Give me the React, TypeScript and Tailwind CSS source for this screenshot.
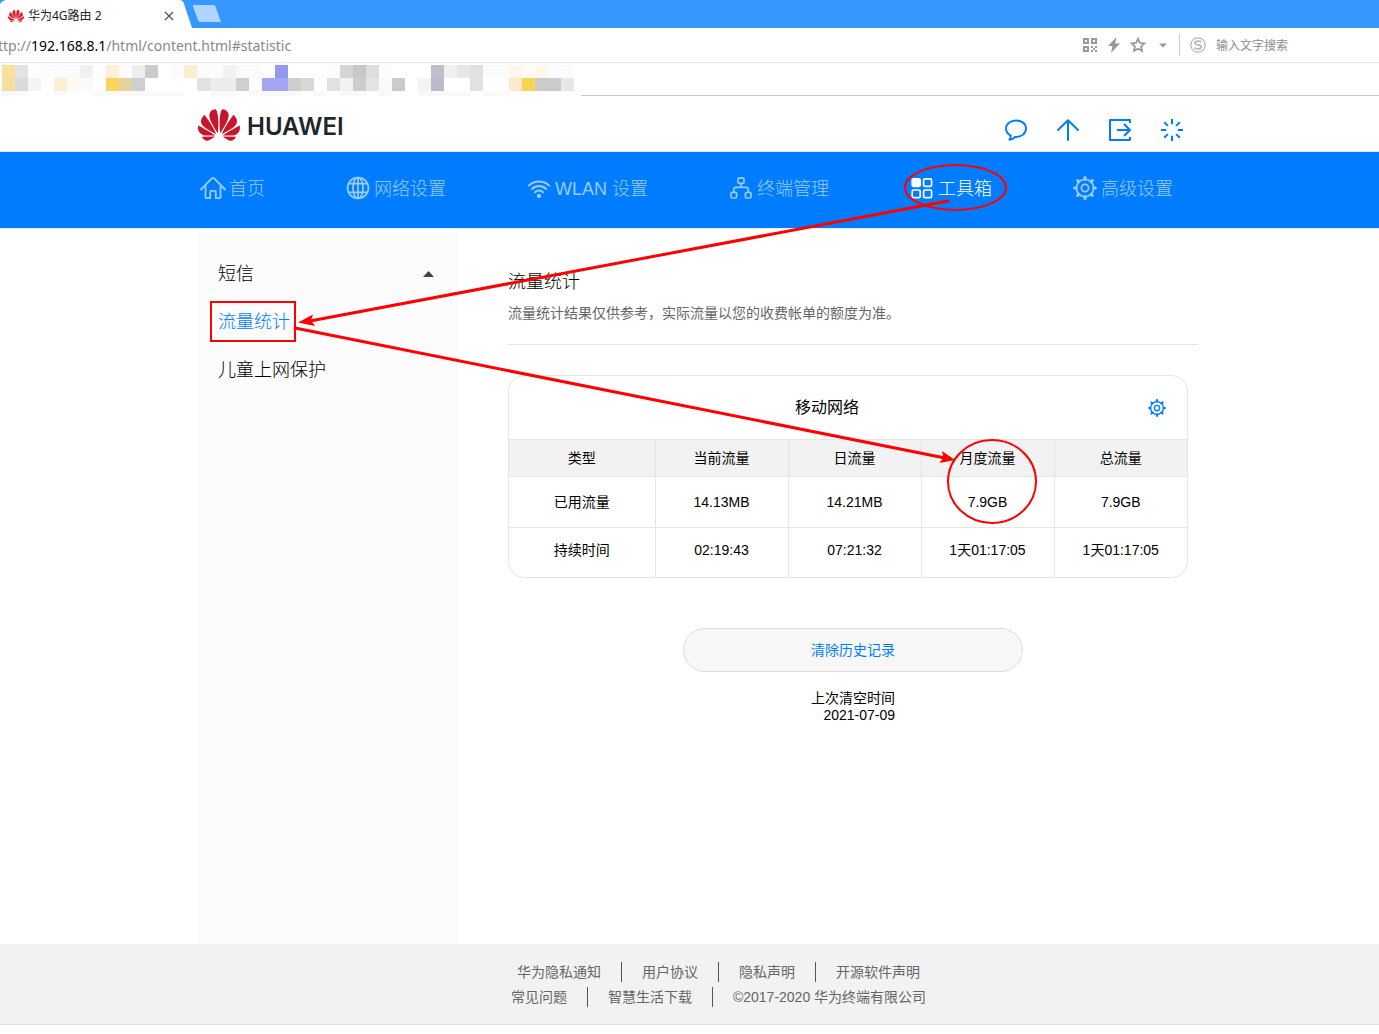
import type { ReactNode } from "react";
import { SiHuawei } from "react-icons/si";

// [row, first column, number of columns, fill]
const mosaic: [number, number, number, string][] = [
  [0, 0, 1, "#fbe199"], [0, 1, 1, "#e3e3e3"], [0, 2, 1, "#fdfdfd"], [0, 3, 3, "#fbfbfb"], [0, 6, 1, "#f1f1f1"],
  [0, 8, 1, "#fdf0d8"], [0, 9, 1, "#fbfbfb"], [0, 10, 1, "#eeeeee"], [0, 11, 1, "#cbcbcb"], [0, 13, 1, "#fbfbfb"],
  [0, 14, 1, "#fdeecd"], [0, 15, 1, "#fdfbf8"], [0, 16, 1, "#fcfcfc"], [0, 17, 1, "#f2f2f2"], [0, 18, 2, "#fbfbfb"],
  [0, 21, 1, "#9698ee"], [0, 25, 1, "#fcfcfc"], [0, 26, 1, "#d5d5d5"], [0, 27, 1, "#c8c8c8"], [0, 28, 1, "#dedede"],
  [0, 29, 1, "#fcfcfc"], [0, 33, 1, "#bfbfcc"], [0, 34, 1, "#f0f0f0"], [0, 35, 1, "#e7e7e7"], [0, 36, 1, "#e1e1e1"],
  [0, 37, 2, "#fbfbfb"], [0, 39, 1, "#fef6ec"], [0, 40, 1, "#fefaf4"], [0, 41, 1, "#fdf8ec"], [0, 42, 2, "#fbfbfb"],
  [1, 0, 1, "#f8de9d"], [1, 1, 1, "#dadada"], [1, 2, 1, "#f4f4f4"], [1, 4, 1, "#fdf0d2"], [1, 5, 1, "#fefaf1"],
  [1, 6, 1, "#f9f9f9"], [1, 8, 1, "#f8d55b"], [1, 9, 1, "#e5d29f"], [1, 10, 1, "#cfcfcf"], [1, 15, 1, "#e1e1e1"],
  [1, 16, 2, "#ececec"], [1, 18, 1, "#cfcfcf"], [1, 19, 1, "#fdfdfd"], [1, 20, 2, "#a4a6f2"], [1, 22, 1, "#cecece"],
  [1, 23, 1, "#d8d8d8"], [1, 25, 1, "#e1e1e1"], [1, 26, 1, "#f2f2f2"], [1, 27, 1, "#cdcdcd"], [1, 28, 1, "#e4e4e4"],
  [1, 29, 1, "#fafafa"], [1, 30, 1, "#cbcbcb"], [1, 32, 1, "#f4f4f8"], [1, 33, 1, "#bbbacb"], [1, 36, 1, "#e1e1e1"],
  [1, 39, 1, "#fdeaca"], [1, 40, 1, "#f8d455"], [1, 41, 2, "#cbcbcb"], [1, 43, 1, "#e7e7e7"],
  [2, 0, 2, "#f9f9f9"], [2, 4, 1, "#f9f9f9"], [2, 7, 7, "#f9f9f9"], [2, 16, 2, "#f9f9f9"], [2, 19, 4, "#f9f9f9"],
  [2, 24, 1, "#f9f9f9"], [2, 26, 2, "#f9f9f9"], [2, 29, 1, "#f9f9f9"], [2, 32, 4, "#f9f9f9"], [2, 37, 2, "#f9f9f9"],
];

const GearIcon = ({ className = "" }: { className?: string }) => (
  <svg className={className} viewBox="0 0 24 24" fill="none" stroke="currentColor" strokeWidth="1.8">
    <circle cx="12" cy="12" r="8.6" />
    <circle cx="12" cy="12" r="3.6" />
    {[0, 45, 90, 135, 180, 225, 270, 315].map((a) => (
      <path key={a} d="M12 3.2V1.6" strokeWidth="3" strokeLinecap="round" transform={`rotate(${a} 12 12)`} />
    ))}
  </svg>
);

const HomeIcon = () => (
  <svg className="-ml-px h-6 w-[26px]" viewBox="0 0 26 24" fill="none" stroke="currentColor" strokeWidth="1.8" strokeLinecap="round" strokeLinejoin="round">
    <path d="M1 13.5 12 2.2a1.4 1.4 0 0 1 2 0L25 13.5" />
    <path d="M5.5 10v11.2c0 .6.4 1 1 1h3.7v-6.4c0-.6.4-1 1-1h3.6c.6 0 1 .4 1 1v6.4h3.7c.6 0 1-.4 1-1V10" />
  </svg>
);

const GlobeIcon = () => (
  <svg className="size-6" viewBox="0 0 24 24" fill="none" stroke="currentColor" strokeWidth="1.7">
    <circle cx="12" cy="12" r="10.5" />
    <ellipse cx="12" cy="12" rx="5" ry="10.5" />
    <path d="M12 1.5v21M2.6 7.7h18.8M2.6 16.3h18.8" />
  </svg>
);

const WifiIcon = () => (
  <svg className="size-6" viewBox="0 0 24 24" fill="none" stroke="currentColor" strokeWidth="2" strokeLinecap="round">
    <path d="M1.8 9.6a14.6 14.6 0 0 1 20.4 0" />
    <path d="M4.9 13a10.2 10.2 0 0 1 14.2 0" />
    <path d="M8 16.2a5.800 5.800 0 0 1 8 0" />
    <circle cx="12" cy="19.9" r="2.2" fill="currentColor" stroke="none" />
  </svg>
);

const DevicesIcon = () => (
  <svg className="size-6" viewBox="0 0 24 24" fill="none" stroke="currentColor" strokeWidth="1.7">
    <rect x="9" y="1.8" width="6" height="5.6" rx="1.4" />
    <rect x="2" y="16.4" width="5.6" height="5.6" rx="1.4" />
    <rect x="16.4" y="16.4" width="5.6" height="5.6" rx="1.4" />
    <path d="M12 7.4v4M4.800 16.4v-3.2c0-1 .8-1.8 1.800-1.8h10.800c1 0 1.800.8 1.800 1.800v3.200" />
  </svg>
);

const ToolsIcon = () => (
  <svg className="size-6" viewBox="0 0 24 24" fill="none" stroke="currentColor" strokeWidth="1.7">
    <rect x="2.2" y="2.8" width="8" height="7.6" rx="1.4" fill="currentColor" />
    <rect x="13.6" y="2.8" width="8" height="7.6" rx="1.4" />
    <rect x="2.2" y="14" width="8" height="7.6" rx="1.4" />
    <rect x="13.6" y="14" width="8" height="7.6" rx="1.4" />
  </svg>
);

const navItems: { label: string; icon: ReactNode; active?: boolean }[] = [
  { label: "首页", icon: <HomeIcon /> },
  { label: "网络设置", icon: <GlobeIcon /> },
  { label: "WLAN 设置", icon: <WifiIcon /> },
  { label: "终端管理", icon: <DevicesIcon /> },
  { label: "工具箱", icon: <ToolsIcon />, active: true },
  { label: "高级设置", icon: <GearIcon className="size-6" /> },
];

const columns = ["类型", "当前流量", "日流量", "月度流量", "总流量"];
const rows = [
  ["已用流量", "14.13MB", "14.21MB", "7.9GB", "7.9GB"],
  ["持续时间", "02:19:43", "07:21:32", "1天01:17:05", "1天01:17:05"],
];

const footerRows = [
  ["华为隐私通知", "用户协议", "隐私声明", "开源软件声明"],
  ["常见问题", "智慧生活下载", "©2017-2020 华为终端有限公司"],
];

function BrowserBar() {
  return (
    <div className="font-['Noto_Sans','Noto_Sans_CJK_SC',sans-serif]">
      {/* Tabs */}
      <div className="flex h-7 bg-[#3697ff]">
        <div className="relative flex h-7 w-[192px] items-center pt-[3px] pl-2">
          <svg className="absolute inset-0" width="192" height="28" viewBox="0 0 192 28" fill="#fff">
            <path d="M0 28V4C2 1.5 4 0 7 0h172c3 0 4 1 5 4l8 24z" />
          </svg>
          <SiHuawei className="relative size-4 text-[#d8232f]" />
          <span className="relative ml-1 text-xs text-[#222]">华为4G路由 2</span>
          <button aria-label="关闭标签页" className="relative mr-[18px] ml-auto text-[#555]">
            <svg width="10" height="10" viewBox="0 0 10 10" stroke="currentColor" strokeWidth="1.3">
              <path d="M1 1l8 8M9 1L1 9" />
            </svg>
          </button>
        </div>
        <button aria-label="新标签页" className="text-[#aed4ff]">
          <svg width="30" height="28" viewBox="0 0 30 28" fill="currentColor">
            <path d="M1 6.5C.8 5.5 1 5 2 5h19c1.5 0 2 .5 2.5 1.5L29 22H9c-1.500 0-2.500-.5-3-2z" />
          </svg>
        </button>
      </div>

      {/* Address bar */}
      <div className="flex h-[35px] items-center overflow-hidden border-b border-[#e6e6e6] bg-white">
        <div className="-ml-0.5 pt-0.5 text-sm text-[#888]">
          ttp://<span className="text-black">192.168.8.1</span>/html/content.html#statistic
        </div>
        <div className="ml-auto flex items-center text-[#999]">
          <button aria-label="二维码">
            <svg width="14" height="14" viewBox="0 0 14 14" fill="none" stroke="currentColor" strokeWidth="2">
              <path d="M1 1h4v4H1zM9 1h4v4H9zM1 9h4v4H1z" />
              <path d="M8 9h2M12 9h2M10 11h2M8 13h2M12 13h2" />
            </svg>
          </button>
          <button aria-label="加速" className="ml-2.5">
            <svg width="14" height="16" viewBox="0 0 14 16" fill="currentColor">
              <path d="M9.5 0 1 9h4.5L4 16l9-9.500H8.200z" />
            </svg>
          </button>
          <button aria-label="收藏" className="ml-[9px]">
            <svg width="16" height="16" viewBox="0 0 16 16" fill="none" stroke="currentColor" strokeWidth="1.8">
              <path d="M8 1.800 9.900 5.900l4.500.5-3.300 3 .9 4.500L8 11.700l-4 2.200.9-4.500-3.300-3 4.500-.5z" />
            </svg>
          </button>
          <button aria-label="更多" className="ml-[13px]">
            <svg width="8" height="5" viewBox="0 0 8 5" fill="currentColor">
              <path d="M0 .5h8L4 4.5z" />
            </svg>
          </button>
          <div className="mr-2.5 ml-3 h-[22px] w-px bg-[#ccc]" />
          <svg width="16" height="16" viewBox="0 0 16 16" fill="none" stroke="#b8b8b8">
            <circle cx="8" cy="8" r="7.2" strokeWidth="1.3" />
            <path d="M11.300 5.100C10.300 4.200 8.800 4 7.500 4.100 6 4.200 4.700 5 4.900 6.200c.2 1.300 1.800 1.400 3.300 1.700 1.500.3 3 .6 2.900 2-.1 1.400-1.800 2-3.300 2-1.300 0-2.700-.4-3.500-1.200" strokeWidth="1.8" />
          </svg>
          <input
            aria-label="搜索"
            placeholder="输入文字搜索"
            className="ml-2.5 w-[163px] bg-transparent pt-0.5 text-xs outline-none placeholder:text-[#8c8c8c]"
          />
        </div>
      </div>

      {/* Bookmarks */}
      <div className="h-[33px] border-b border-[#c9c9c9] bg-white">
        <svg className="relative block" width="581" height="33" viewBox="0 63 581 33" shapeRendering="crispEdges">
          <rect y="63" width="581" height="33" fill="#fff" />
          {mosaic.map(([row, col, span, fill]) => (
            <rect key={`${row}-${col}`} x={2 + col * 13} y={65 + row * 13} width={span * 13} height={row === 2 ? 5 : 13} fill={fill} />
          ))}
        </svg>
      </div>
    </div>
  );
}

function Header() {
  return (
    <header className="h-14 border-b border-[#e8e8e8] bg-white pl-[17px]">
      <div className="mx-auto flex max-w-[1000px] items-start justify-between">
        <a href="#home" className="flex items-center pt-2 text-[#20262a]">
          <SiHuawei className="size-[42px] text-[#c7162b]" />
          <span className="ml-[7px] pt-1 font-['Inter',sans-serif] text-2xl font-semibold">HUAWEI</span>
        </a>
        <div className="flex gap-[30px] pt-[23px] pr-[15px] text-[#007dff]">
          <button aria-label="短信">
            <svg width="22" height="22" viewBox="0 0 22 22" fill="none" stroke="currentColor" strokeWidth="1.9" strokeLinejoin="round">
              <path d="M11 1.500C5.500 1.500 1 5 1 9.500c0 3 1.700 5.500 4.800 7.100-.1 1.600-.5 3-1.400 4.200 2.300-.3 4.200-1.300 5.600-2.800h1c5.500 0 10-3.500 10-8.500s-4.500-8-10-8z" />
            </svg>
          </button>
          <button aria-label="更新">
            <svg width="22" height="22" viewBox="0 0 22 22" fill="none" stroke="currentColor" strokeWidth="2" strokeLinecap="round" strokeLinejoin="round">
              <path d="M11 21V1.200M1 11 11 1.200l10 9.800" />
            </svg>
          </button>
          <button aria-label="退出">
            <svg width="22" height="22" viewBox="0 0 22 22" fill="none" stroke="currentColor" strokeWidth="2" strokeLinejoin="round">
              <path d="M21 4V1H1v20h20v-3M8 11h13M15 5l6 6-6 6" />
            </svg>
          </button>
          <button aria-label="重启">
            <svg width="22" height="22" viewBox="0 0 22 22" fill="none" stroke="currentColor" strokeWidth="2">
              {[0, 45, 90, 135, 180, 225, 270, 315].map((a) => (
                <path key={a} d="M11 0v5.200" transform={`rotate(${a} 11 11)`} />
              ))}
            </svg>
          </button>
        </div>
      </div>
    </header>
  );
}

function Nav() {
  return (
    <nav className="bg-[#007dff] pl-[17px]">
      <ul className="mx-auto flex h-[76px] max-w-[1000px] items-center gap-[81px] pb-1 pl-[3px]">
        {navItems.map(({ label, icon, active }) => (
          <li key={label}>
            <a href="#nav" className={`flex items-center text-lg font-light whitespace-nowrap ${active ? "text-white" : "text-[#99cbff]"}`}>
              <span className="w-7">{icon}</span>
              <span className="pt-0.5">{label}</span>
            </a>
          </li>
        ))}
      </ul>
    </nav>
  );
}

function Sidebar() {
  return (
    <aside className="w-[260px] shrink-0 bg-[#fcfcfc] pt-[21px] text-lg font-light text-black">
      <a href="#sms" className="flex h-12 items-center justify-between pr-6 pl-5">
        短信
        <svg width="11" height="6" viewBox="0 0 11 6" fill="#444">
          <path d="M0 6 5.5 0 11 6z" />
        </svg>
      </a>
      <a href="#statistic" className="flex h-12 items-center pl-5 text-[#007dff]">流量统计</a>
      <a href="#parental" className="flex h-12 items-center pl-5">儿童上网保护</a>
    </aside>
  );
}

function Statistic() {
  return (
    <main className="ml-[50px] flex-1 pt-[39px] text-sm text-black">
      <h1 className="text-lg leading-7 font-light">流量统计</h1>
      <p className="mt-[7px] border-b border-[#e5e5e5] pb-[21px] text-[#666]">
        流量统计结果仅供参考，实际流量以您的收费帐单的额度为准。
      </p>

      <section className="mt-[30px] mr-2.5 overflow-hidden rounded-2xl border border-[#e5e5e5]">
        <div className="relative flex h-[63px] items-center justify-center">
          <h2 className="pr-[42px] text-base">移动网络</h2>
          <button aria-label="设置" className="absolute right-[21px] text-[#007dff]">
            <GearIcon className="block size-[18px]" />
          </button>
        </div>
        <table className="w-full table-fixed text-center">
          <thead>
            <tr className="h-[37px] border-t border-[#e5e5e5] bg-[#f2f2f2]">
              {columns.map((c) => (
                <th key={c} className="border-r border-[#e5e5e5] font-normal first:w-[146px] last:border-r-0">{c}</th>
              ))}
            </tr>
          </thead>
          <tbody>
            {rows.map((row) => (
              <tr key={row[0]} className="h-[51px] border-t border-[#e5e5e5] last:h-[49px] last:[&>td]:pb-1">
                {row.map((cell, i) => (
                  <td key={i} className="border-r border-[#e5e5e5] last:border-r-0">{cell}</td>
                ))}
              </tr>
            ))}
          </tbody>
        </table>
      </section>

      <div className="mt-[50px] flex flex-col items-center">
        <button className="h-11 w-[340px] rounded-full border border-[#ddd] bg-[#f7f7f7] text-[#007dff]">清除历史记录</button>
        <p className="mt-[18px] text-right leading-[17px]">
          上次清空时间
          <br />
          2021-07-09
        </p>
      </div>
    </main>
  );
}

// Red marks that walk through the steps: 工具箱 -> 流量统计 -> 月度流量
function Annotations() {
  return (
    <div className="pointer-events-none absolute inset-x-0 top-0 pl-[17px]">
      <svg className="mx-auto block" width="1000" height="440" viewBox="198 96 1000 440" fill="none" stroke="#f00">
        <ellipse cx="955.5" cy="187.5" rx="50.5" ry="22.5" strokeWidth="2" />
        <rect x="211" y="302" width="84" height="39" strokeWidth="2" />
        <ellipse cx="992" cy="481.5" rx="44" ry="41.5" strokeWidth="2" />
        <path d="M948 201 310 321M295 328 945 458" strokeWidth="3" strokeLinecap="round" />
        <path d="M298 322.500 313 314.500 311 320.500 315 326z" fill="#f00" stroke="none" />
        <path d="M955 460 942 451 943.500 457.500 939.500 463z" fill="#f00" stroke="none" />
      </svg>
    </div>
  );
}

function Footer() {
  return (
    <footer className="flex h-[81px] flex-col items-center gap-[5px] border-b border-[#e0e0e0] bg-[#f2f2f2] pt-[18px] pl-[58px] text-sm text-[#666]">
      {footerRows.map((row) => (
        <ul key={row[0]} className="flex h-5 divide-x divide-[#555] leading-5">
          {row.map((label) => (
            <li key={label} className="px-5">
              <a href="#footer">{label}</a>
            </li>
          ))}
        </ul>
      ))}
    </footer>
  );
}

export default function App() {
  return (
    <div className="min-h-screen bg-white font-['Liberation_Sans','Noto_Sans_CJK_SC',sans-serif]">
      <BrowserBar />
      <div className="relative">
        <Header />
        <Nav />
        <div className="border-t border-[#eee] pl-[17px]">
          <div className="mx-auto flex min-h-[715px] max-w-[1000px]">
            <Sidebar />
            <Statistic />
          </div>
        </div>
        <Annotations />
      </div>
      <Footer />
    </div>
  );
}
